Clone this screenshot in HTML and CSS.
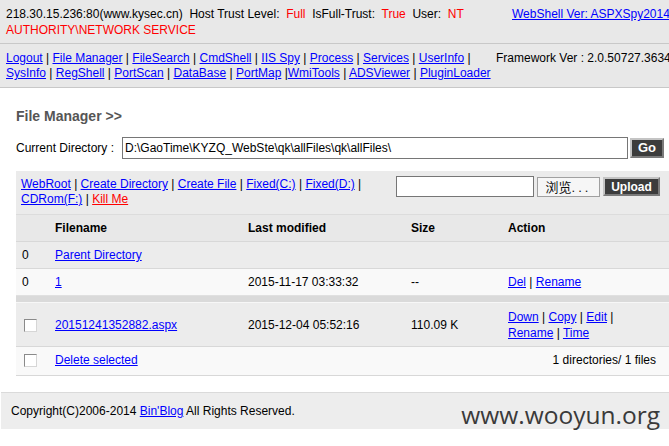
FILE: index.html
```html
<!DOCTYPE html>
<html>
<head>
<meta charset="utf-8">
<title>ASPXSpy</title>
<link rel="stylesheet" href="styles.css">
</head>
<body>
<div class="page">
  <header class="bar info">
    <div class="info-left">218.30.15.236:80(www.kysec.cn)&nbsp; Host Trust Level:&nbsp; <span class="red">Full</span>&nbsp; IsFull-Trust:&nbsp; <span class="red">True</span>&nbsp; User:&nbsp; <span class="red">NT AUTHORITY\NETWORK SERVICE</span></div>
    <div class="info-right"><a href="#">WebShell Ver: ASPXSpy2014</a></div>
  </header>
  <nav class="bar nav">
    <div class="nav-left"><a href="#">Logout</a> | <a href="#">File Manager</a> | <a href="#">FileSearch</a> | <a href="#">CmdShell</a> | <a href="#">IIS Spy</a> | <a href="#">Process</a> | <a href="#">Services</a> | <a href="#">UserInfo</a> | <a href="#">SysInfo</a> | <a href="#">RegShell</a> | <a href="#">PortScan</a> | <a href="#">DataBase</a> | <a href="#">PortMap</a> |<a href="#">WmiTools</a> | <a href="#">ADSViewer</a> | <a href="#">PluginLoader</a></div>
    <div class="nav-right">Framework Ver : 2.0.50727.3634</div>
  </nav>
  <main class="main">
    <h2 class="title">File Manager &gt;&gt;</h2>
    <div class="dir-row">
      <label class="dir-label">Current Directory :</label>
      <input class="dir-input" type="text" value="D:\GaoTime\KYZQ_WebSte\qk\allFiles\qk\allFiles\">
      <button class="btn-dark btn-go">Go</button>
    </div>
    <div class="toolbar">
      <div class="tools"><a href="#">WebRoot</a> | <a href="#">Create Directory</a> | <a href="#">Create File</a> | <a href="#">Fixed(C:)</a> | <a href="#">Fixed(D:)</a> | <a href="#">CDRom(F:)</a> | <a href="#" class="red">Kill Me</a></div>
      <div class="upload">
        <span class="filebox"></span>
        <span class="browse">浏览<span class="dots">...</span></span>
        <button class="btn-dark btn-upload">Upload</button>
      </div>
    </div>
    <table class="files">
      <colgroup>
        <col class="c1"><col class="c2"><col class="c3"><col class="c4"><col class="c5">
      </colgroup>
      <thead>
        <tr><th></th><th>Filename</th><th>Last modified</th><th>Size</th><th>Action</th></tr>
      </thead>
      <tbody>
        <tr class="alt1"><td>0</td><td><a href="#">Parent Directory</a></td><td></td><td></td><td></td></tr>
        <tr class="alt2"><td>0</td><td><a href="#">1</a></td><td>2015-11-17 03:33:32</td><td>--</td><td class="action"><a href="#">Del</a> | <a href="#">Rename</a></td></tr>
        <tr class="sep"><td colspan="5"><div class="sep-fill"></div></td></tr>
        <tr class="alt1 file"><td><input class="cb" type="checkbox"></td><td><a href="#">20151241352882.aspx</a></td><td>2015-12-04 05:52:16</td><td>110.09 K</td><td class="action"><a href="#">Down</a> | <a href="#">Copy</a> | <a href="#">Edit</a> | <a href="#">Rename</a> | <a href="#">Time</a></td></tr>
        <tr class="alt2 last"><td><input class="cb" type="checkbox"></td><td><a href="#">Delete selected</a></td><td colspan="3" class="count">1 directories/ 1 files</td></tr>
      </tbody>
    </table>
  </main>
  <footer class="footer">
    Copyright(C)2006-2014 <a href="#">Bin'Blog</a> All Rights Reserved.
    <span class="watermark">www.wooyun.org</span>
  </footer>
</div>
</body>
</html>
```
FILE: styles.css
```css
html, body {
  margin: 0;
  padding: 0;
  background: #fff;
}
body {
  width: 669px;
  height: 446px;
  overflow: hidden;
  font-family: "Liberation Sans", Arial, sans-serif;
  font-size: 12px;
  color: #000;
}
a {
  color: #0000ff;
  text-decoration: underline;
}
.red {
  color: #ff0000;
}
a.red {
  color: #ff0000;
}
.page {
  width: 669px;
}
.bar {
  display: flex;
  background: #e8e8e8;
  border-bottom: 1px solid #c8c8c8;
  white-space: nowrap;
}
.info {
  padding: 6px 0 5px 6px;
  line-height: 16px;
}
.info-left {
  width: 500px;
  flex: 0 0 500px;
  white-space: normal;
}
.info-right {
  margin-left: 6px;
}
.nav {
  padding: 7px 0 6px 6px;
  line-height: 15px;
}
.nav-left {
  width: 490px;
  flex: 0 0 490px;
  white-space: normal;
}
.nav-right {
  margin-left: 0;
}
.main {
  padding: 19px 0 16px 16px;
}
.title {
  margin: 0;
  font-size: 14px;
  line-height: 18px;
  font-weight: bold;
  color: #555;
}
.dir-row {
  display: flex;
  align-items: center;
  margin-top: 12px;
  height: 22px;
}
.dir-label {
  width: 106px;
  flex: 0 0 106px;
}
.dir-input {
  box-sizing: border-box;
  width: 506px;
  height: 22px;
  margin: 0;
  padding: 0 2px;
  border: 1px solid #767676;
  font-family: "Liberation Sans", Arial, sans-serif;
  font-size: 12px;
  color: #000;
  background: #fff;
  outline: none;
}
.btn-dark {
  box-sizing: border-box;
  margin: 0;
  padding: 0;
  background: #3c3c3c;
  color: #fff;
  font-family: "Liberation Sans", Arial, sans-serif;
  font-weight: bold;
  font-size: 12px;
  border: 2px solid;
  border-color: #c4c4c4 #7a7a7a #7a7a7a #c4c4c4;
  line-height: 14px;
}
.btn-go {
  width: 34px;
  height: 20px;
  margin-left: 2px;
  font-size: 13px;
}
.toolbar {
  display: flex;
  margin-top: 12px;
  background: #ebebeb;
  padding: 6px 9px 7px 5px;
  line-height: 15px;
}
.tools {
  width: 375px;
  flex: 0 0 375px;
}
.upload {
  display: flex;
  align-items: flex-start;
  margin-top: -1px;
}
.filebox {
  box-sizing: border-box;
  width: 138px;
  height: 21px;
  border: 1px solid #767676;
  background: #fff;
}
.browse {
  box-sizing: border-box;
  width: 63px;
  height: 20px;
  margin: 1px 0 0 3px;
  border: 1px solid #a0a0a0;
  background: #f6f6f6;
  font-family: "Noto Sans CJK SC", "Liberation Sans", sans-serif;
  font-size: 13px;
  line-height: 18px;
  text-align: center;
  color: #111;
}
.dots {
  letter-spacing: 3px;
  font-family: "Liberation Sans", Arial, sans-serif;
}
.btn-upload {
  width: 57px;
  height: 19px;
  margin: 1px 0 0 3px;
}
.files {
  width: 653px;
  table-layout: fixed;
  border-collapse: collapse;
  border-spacing: 0;
}
.c1 { width: 33px; }
.c2 { width: 193px; }
.c3 { width: 163px; }
.c4 { width: 97px; }
.c5 { width: 167px; }
.files th,
.files td {
  padding: 5px 6px;
  line-height: 16px;
  text-align: left;
  vertical-align: middle;
  white-space: nowrap;
}
.files th {
  background: #e8e8e8;
  border-top: 1px solid #dcdcdc;
  font-weight: bold;
}
.files td {
  border-top: 1px solid #d8d8d8;
}
.alt1 td {
  background: #ececec;
}
.alt2 td {
  background: #f9f9f9;
}
.files td.action {
  white-space: normal;
  padding-right: 30px;
}
.sep td {
  padding: 0;
  border-top: 1px solid #e0e0e0;
  background: #dadada;
  line-height: 0;
}
.sep-fill {
  height: 6px;
}
.file td {
  border-top: 1px solid #f7f7f7;
  padding-top: 6px;
  padding-bottom: 5px;
}
.last td {
  padding-top: 5px;
  padding-bottom: 7px;
  border-bottom: 1px solid #d8d8d8;
}
.files td.count {
  text-align: right;
  padding-right: 13px;
}
.cb {
  -webkit-appearance: none;
  appearance: none;
  box-sizing: border-box;
  width: 13px;
  height: 13px;
  margin: 0 0 0 2px;
  vertical-align: middle;
  background: #fff;
  border: 1px solid;
  border-color: #8a8a8a #d6d6d6 #d6d6d6 #8a8a8a;
}
.footer {
  position: relative;
  margin-left: 1px;
  height: 36px;
  padding-left: 10px;
  line-height: 36px;
  background: #ededed;
  border-top: 1px solid #dadada;
}
.watermark {
  position: absolute;
  right: 9px;
  top: 5px;
  font-family: "Open Sans", "DejaVu Sans", sans-serif;
  font-size: 24.5px;
  line-height: normal;
  color: #3a3a3a;
  white-space: nowrap;
}
```
